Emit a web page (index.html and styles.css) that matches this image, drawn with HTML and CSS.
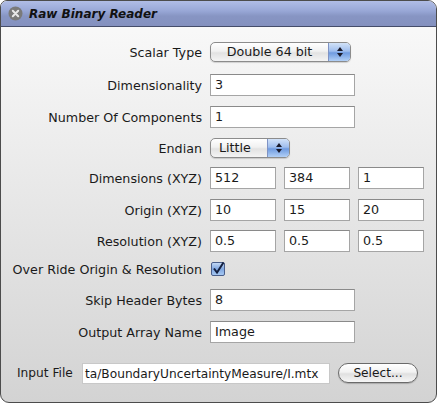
FILE: index.html
```html
<!DOCTYPE html>
<html>
<head>
<meta charset="utf-8">
<link rel="stylesheet" href="styles.css">
</head>
<body>
<div class="window">
  <div class="titlebar">
    <span class="close"><svg width="15" height="15" viewBox="0 0 15 15"><circle cx="7.5" cy="7.5" r="7" fill="#7a7a7a"/><path d="M4.8 4.8 L10.2 10.2 M10.2 4.8 L4.8 10.2" stroke="#e8e8e8" stroke-width="2" stroke-linecap="round"/></svg></span>
    <span class="title">Raw Binary Reader</span>
  </div>
  <div class="content">
    <div class="row r-scalar">
      <label class="lbl">Scalar Type</label>
      <div class="popup popup-wide"><span class="ptext center">Double 64 bit</span><span class="arrows"><svg width="8" height="12" viewBox="0 0 8 12"><path d="M4 1 L7 5 L1 5 Z M4 11 L7 7 L1 7 Z" fill="#1a1a2a"/></svg></span></div>
    </div>
    <div class="row r-dim">
      <label class="lbl">Dimensionality</label>
      <div class="field wide">3</div>
    </div>
    <div class="row r-comp">
      <label class="lbl">Number Of Components</label>
      <div class="field wide">1</div>
    </div>
    <div class="row r-endian">
      <label class="lbl">Endian</label>
      <div class="popup popup-small"><span class="ptext">Little</span><span class="arrows"><svg width="8" height="12" viewBox="0 0 8 12"><path d="M4 1 L7 5 L1 5 Z M4 11 L7 7 L1 7 Z" fill="#1a1a2a"/></svg></span></div>
    </div>
    <div class="row r-dims">
      <label class="lbl">Dimensions (XYZ)</label>
      <div class="triple"><div class="field small">512</div><div class="field small">384</div><div class="field small">1</div></div>
    </div>
    <div class="row r-origin">
      <label class="lbl">Origin (XYZ)</label>
      <div class="triple"><div class="field small">10</div><div class="field small">15</div><div class="field small">20</div></div>
    </div>
    <div class="row r-res">
      <label class="lbl">Resolution (XYZ)</label>
      <div class="triple"><div class="field small">0.5</div><div class="field small">0.5</div><div class="field small">0.5</div></div>
    </div>
    <div class="row r-over">
      <label class="lbl">Over Ride Origin &amp; Resolution</label>
      <span class="check"><svg width="14" height="14" viewBox="0 0 14 14"><defs><linearGradient id="cg" x1="0" y1="0" x2="0" y2="1"><stop offset="0" stop-color="#c8dcf6"/><stop offset="0.5" stop-color="#7fa6e0"/><stop offset="1" stop-color="#a9cbf4"/></linearGradient></defs><rect x="0.5" y="0.5" width="13" height="13" rx="1.5" fill="url(#cg)" stroke="#4a5e8a"/><path d="M3 6.5 L6 10.5 L12.5 0.5" fill="none" stroke="#142040" stroke-width="2"/></svg></span>
    </div>
    <div class="row r-skip">
      <label class="lbl">Skip Header Bytes</label>
      <div class="field wide">8</div>
    </div>
    <div class="row r-out">
      <label class="lbl">Output Array Name</label>
      <div class="field wide">Image</div>
    </div>
    <div class="filerow">
      <label class="flbl">Input File</label>
      <div class="field file">ta/BoundaryUncertaintyMeasure/I.mtx</div>
      <div class="button">Select...</div>
    </div>
  </div>
</div>
</body>
</html>
```

FILE: styles.css
```css
html, body {
  margin: 0;
  padding: 0;
  background: #ffffff;
}
body {
  font-family: "DejaVu Sans", "Liberation Sans", sans-serif;
  font-size: 12.7px;
  color: #1a1a1a;
}
.window {
  width: 435px;
  height: 401px;
  border: 1px solid #4c4c4c;
  border-radius: 7px 9px 9px 9px;
  overflow: hidden;
  background: linear-gradient(to bottom, #fbfbfb 0%, #e9e9e9 45%, #d3d3d3 100%);
  display: flex;
  flex-direction: column;
}
.titlebar {
  height: 25px;
  flex: none;
  border-bottom: 1px solid #454d6a;
  background: linear-gradient(to bottom, #b0bde6 0%, #98a7d6 40%, #8795c3 60%, #8491bf 100%);
  display: flex;
  align-items: center;
  padding-left: 7px;
  gap: 6px;
}
.close {
  display: flex;
  width: 15px;
  height: 15px;
}
.title {
  font-family: "DejaVu Sans", sans-serif;
  font-weight: bold;
  font-style: italic;
  font-size: 12px;
  color: #111;
}
.content {
  display: flex;
  flex-direction: column;
  padding-top: 14px;
}
.row {
  display: grid;
  grid-template-columns: 201px auto;
  column-gap: 8px;
  align-items: center;
  height: 22px;
}
.r-dim { margin-top: 11px; }
.r-comp { margin-top: 10px; }
.r-endian { margin-top: 9px; }
.r-dims { margin-top: 8px; }
.r-origin { margin-top: 10px; }
.r-res { margin-top: 9px; }
.r-over { margin-top: 6px; }
.r-skip { margin-top: 9px; }
.r-out { margin-top: 10px; }
.lbl {
  text-align: right;
  white-space: nowrap;
}
.field {
  box-sizing: border-box;
  height: 22px;
  background: #fff;
  border: 1px solid #a5a5a5;
  border-top-color: #8a8a8a;
  padding: 0 4px;
  line-height: 20px;
  white-space: nowrap;
  overflow: hidden;
}
.wide { width: 145px; }
.small { width: 66px; }
.triple {
  display: flex;
  gap: 8px;
}
.popup {
  box-sizing: border-box;
  height: 20px;
  border: 1px solid #8c8c8c;
  border-radius: 5px;
  background: linear-gradient(to bottom, #ffffff 0%, #f1f1f1 45%, #e2e2e2 55%, #f4f4f4 100%);
  display: flex;
  overflow: hidden;
  box-shadow: 0 1px 1px rgba(0,0,0,0.15);
}
.popup-wide { width: 141px; }
.popup-small { width: 80px; }
.ptext {
  flex: 1;
  line-height: 18px;
  padding-left: 8px;
}
.ptext.center {
  text-align: center;
  padding-left: 0;
}
.arrows {
  width: 21px;
  border-left: 1px solid #7f93c4;
  background: linear-gradient(to bottom, #d2e2f8 0%, #9fbeee 45%, #6f9be0 55%, #b2d0f6 100%);
  display: flex;
  align-items: center;
  justify-content: center;
}
.check {
  display: flex;
  width: 14px;
  height: 14px;
  margin-left: 1px;
}
.filerow {
  display: flex;
  align-items: center;
  margin-top: 19px;
  padding-left: 15px;
  height: 22px;
  font-size: 12.2px;
}
.flbl {
  white-space: nowrap;
  width: 66px;
  padding-left: 1px;
  box-sizing: border-box;
}
.file {
  width: 248px;
  height: 21px;
  border: 1px solid #c8c8c8;
  padding-left: 2px;
}
.button {
  margin-left: 8px;
  box-sizing: border-box;
  width: 80px;
  height: 20px;
  border: 1px solid #6a6a6a;
  border-radius: 10px;
  background: linear-gradient(to bottom, #ffffff 0%, #f2f2f2 45%, #e0e0e0 55%, #f6f6f6 100%);
  text-align: center;
  line-height: 18px;
  box-shadow: 0 1px 1px rgba(0,0,0,0.2);
}
```
